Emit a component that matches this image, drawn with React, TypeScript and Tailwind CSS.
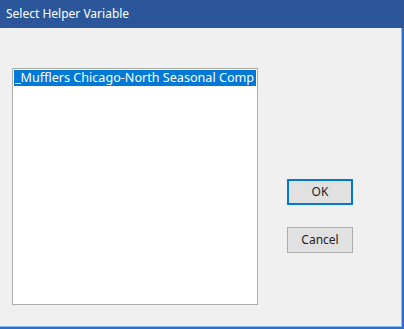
import React from "react";

const font = { fontFamily: '"Noto Sans", "Open Sans", sans-serif' };

export default function App() {
  return (
    <div
      className="w-[404px] h-[329px] flex flex-col bg-[#f0f0f0] overflow-hidden"
      style={font}
    >
      <div className="h-[28px] shrink-0 bg-[#2b579a] text-white text-[12px] flex items-center pl-[6px]">
        Select Helper Variable
      </div>
      <div className="flex-1 border-r-2 border-b-2 border-[#2b6fc8]">
        <div className="h-full border-r border-b border-[#8fb8ea] flex items-start pl-[12px] pt-[40px]">
          <div className="w-[246px] h-[237px] bg-white border border-[#adadad] p-[1px]">
            <div className="h-[16px] bg-[#0078d7] text-white text-[12.6px] leading-[16px] whitespace-nowrap overflow-hidden pl-[1px]">
              _Mufflers Chicago-North Seasonal Comp
            </div>
          </div>
          <div className="ml-[29px] mt-[111px] flex flex-col gap-[22px]">
            <button className="w-[66px] h-[26px] bg-[#e1e1e1] border-2 border-[#0078d7] text-[12px] text-[#222] flex items-center justify-center">
              OK
            </button>
            <button className="w-[66px] h-[26px] bg-[#e1e1e1] border border-[#adadad] text-[12px] text-[#222] flex items-center justify-center">
              Cancel
            </button>
          </div>
        </div>
      </div>
    </div>
  );
}
